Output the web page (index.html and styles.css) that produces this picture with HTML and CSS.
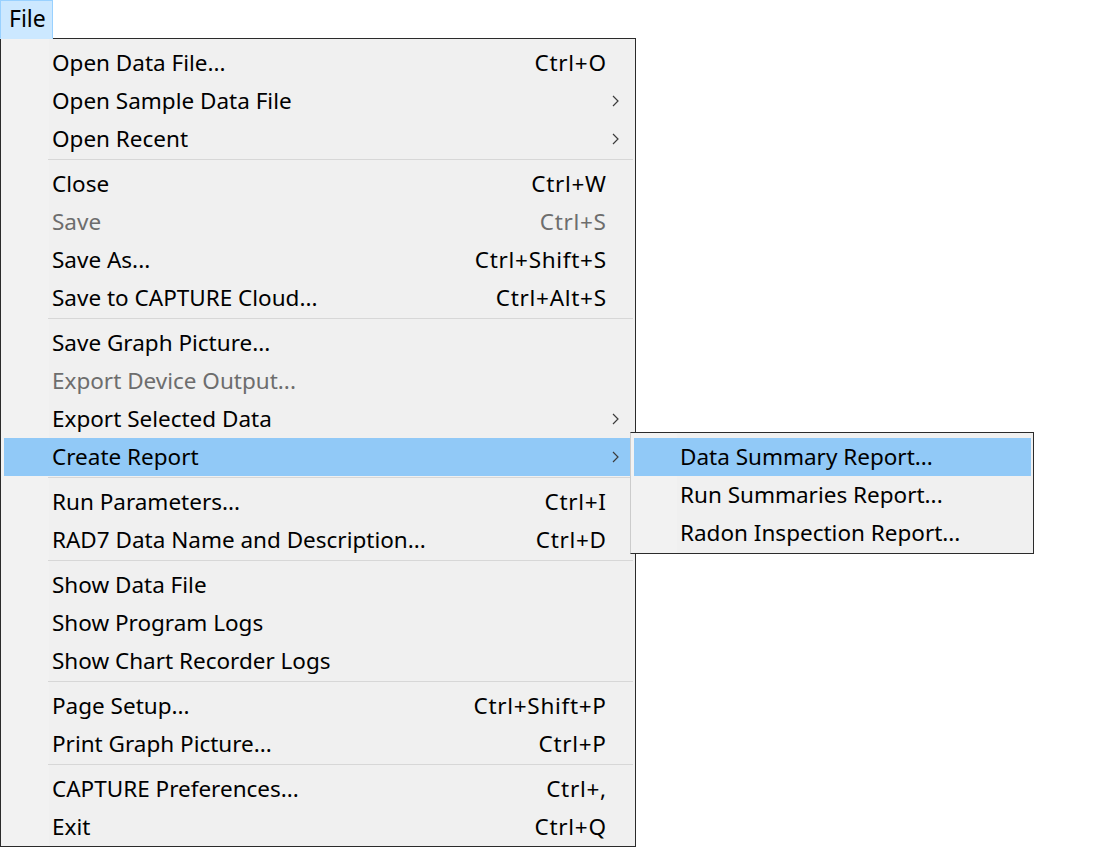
FILE: index.html
```html
<!DOCTYPE html>
<html lang="en">
<head>
    <meta charset="UTF-8">
    <title>File Menu</title>
    <link rel="stylesheet" href="styles.css">
</head>
<body>
    <div class="menubar">
        <span class="menu-title">File</span>
    </div>

    <div class="menu">
        <div class="item"><span class="label">Open Data File...</span><span class="key">Ctrl+O</span></div>
        <div class="item"><span class="label">Open Sample Data File</span><svg class="arrow" viewBox="0 0 8 12"><polyline points="1,1 6,6 1,11"/></svg></div>
        <div class="item"><span class="label">Open Recent</span><svg class="arrow" viewBox="0 0 8 12"><polyline points="1,1 6,6 1,11"/></svg></div>
        <div class="separator"></div>
        <div class="item"><span class="label">Close</span><span class="key">Ctrl+W</span></div>
        <div class="item disabled"><span class="label">Save</span><span class="key">Ctrl+S</span></div>
        <div class="item"><span class="label">Save As...</span><span class="key">Ctrl+Shift+S</span></div>
        <div class="item"><span class="label">Save to CAPTURE Cloud...</span><span class="key">Ctrl+Alt+S</span></div>
        <div class="separator"></div>
        <div class="item"><span class="label">Save Graph Picture...</span></div>
        <div class="item disabled"><span class="label">Export Device Output...</span></div>
        <div class="item"><span class="label">Export Selected Data</span><svg class="arrow" viewBox="0 0 8 12"><polyline points="1,1 6,6 1,11"/></svg></div>
        <div class="item active"><span class="label">Create Report</span><svg class="arrow" viewBox="0 0 8 12"><polyline points="1,1 6,6 1,11"/></svg></div>
        <div class="separator"></div>
        <div class="item"><span class="label">Run Parameters...</span><span class="key">Ctrl+I</span></div>
        <div class="item"><span class="label">RAD7 Data Name and Description...</span><span class="key">Ctrl+D</span></div>
        <div class="separator"></div>
        <div class="item"><span class="label">Show Data File</span></div>
        <div class="item"><span class="label">Show Program Logs</span></div>
        <div class="item"><span class="label">Show Chart Recorder Logs</span></div>
        <div class="separator"></div>
        <div class="item"><span class="label">Page Setup...</span><span class="key">Ctrl+Shift+P</span></div>
        <div class="item"><span class="label">Print Graph Picture...</span><span class="key">Ctrl+P</span></div>
        <div class="separator"></div>
        <div class="item"><span class="label">CAPTURE Preferences...</span><span class="key">Ctrl+,</span></div>
        <div class="item"><span class="label">Exit</span><span class="key">Ctrl+Q</span></div>
    </div>

    <div class="submenu">
        <div class="item active"><span class="label">Data Summary Report...</span></div>
        <div class="item"><span class="label">Run Summaries Report...</span></div>
        <div class="item"><span class="label">Radon Inspection Report...</span></div>
    </div>
</body>
</html>
```

FILE: styles.css
```css
body {
    margin: 0;
    padding: 0;
    background-color: #fff;
    font-family: "Noto Sans", "Open Sans", sans-serif;
    font-size: 22.5px;
    color: #000;
}

.menubar {
    display: flex;
    height: 38px;
}
.menu-title {
    position: relative;
    z-index: 2;
    box-sizing: border-box;
    width: 53px;
    height: 39px;
    padding-left: 8px;
    line-height: 35px;
    font-size: 23px;
    background-color: #cce8ff;
    border: 1px solid #99d1ff;
    border-bottom-color: #cce8ff;
}

.menu {
    box-sizing: border-box;
    width: 636px;
    padding: 5px 2px 0 3px;
    border: 1px solid #2b2b2b;
    background: linear-gradient(to right, #f2f2f2 48px, #f0f0f0 48px);
}

.item {
    display: flex;
    align-items: center;
    height: 38px;
    padding: 0 27px 0 48px;
    line-height: 36px;
}
.item .label {
    flex: 1;
    white-space: nowrap;
}
.item .key {
    white-space: nowrap;
    letter-spacing: 0.7px;
    margin-right: -0.7px;
}
.item.disabled {
    color: #6d6d6d;
}
.item.active {
    background-color: #91c9f7;
}

.arrow {
    width: 8px;
    height: 12px;
    margin-right: -14px;
    fill: none;
    stroke: #3c3c3c;
    stroke-width: 1.2;
}

.separator {
    height: 1px;
    margin: 1px 0 5px 44px;
    background-color: #d7d7d7;
}

.submenu {
    position: absolute;
    left: 630px;
    top: 432px;
    box-sizing: border-box;
    width: 404px;
    padding: 5px 2px 1px 3px;
    border: 1px solid #2b2b2b;
    border-left-color: #cccccc;
    background: linear-gradient(to right, #f2f2f2 46px, #f0f0f0 46px);
}
.submenu .item {
    padding-left: 46px;
    padding-right: 10px;
}
```
